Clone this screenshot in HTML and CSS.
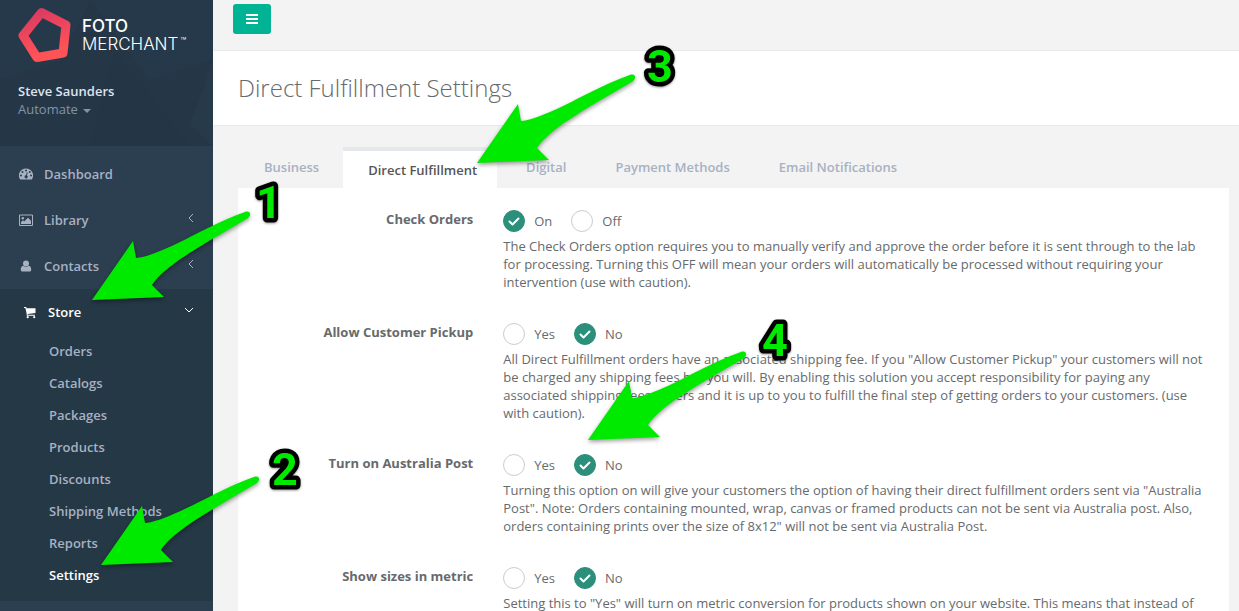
FILE: index.html
```html
<!DOCTYPE html>
<html lang="en">
<head>
	<meta charset="utf-8">
	<title>Direct Fulfillment Settings</title>
	<link rel="stylesheet" href="styles.css">
</head>
<body>
<div class="wrapper">
	<nav class="sidebar">
		<div class="nav-header">
			<svg class="header-pattern" viewBox="0 0 213 146" preserveAspectRatio="none" aria-hidden="true">
				<path d="M0 0L90 0L60 60L0 80Z" fill="#26394a"/>
				<path d="M90 0L213 0L213 60L150 80Z" fill="#26394a"/>
				<path d="M115 50L190 146L90 146Z" fill="#243645"/>
				<path d="M213 60L190 125L213 146Z" fill="#273a49"/>
			</svg>
			<a class="logo" href="#">
				<svg class="logo-mark" width="54" height="56" viewBox="0 0 54 56" aria-hidden="true">
					<defs>
						<linearGradient id="logoFill" x1="0" y1="0" x2="0.3" y2="1">
							<stop offset="0" stop-color="#d93a62"/>
							<stop offset="1" stop-color="#ff5357"/>
						</linearGradient>
					</defs>
					<path d="M23.500 5.500L48 18L45 46L19 50.500L5 28.500Z" fill="none" stroke="url(#logoFill)" stroke-width="9" stroke-linejoin="round"/>
				</svg>
				<span class="logo-text"><b>FOTO</b><span>MERCHANT<small>™</small></span></span>
			</a>
			<a class="profile" href="#">
				<strong>Steve Saunders</strong>
				<span>Automate <i class="caret"></i></span>
			</a>
		</div>
		<ul class="menu">
			<li><a href="#">
				<svg class="icon" viewBox="0 0 14 14"><path fill="currentColor" fill-rule="evenodd" d="M7 1.500a7 7 0 0 0-6 10.700q.2.300.6.300h10.800q.4 0 .6-.300A7 7 0 0 0 7 1.500zM2 9.500a1 1 0 1 1 0-2 1 1 0 0 1 0 2zM3.500 6a1 1 0 1 1 0-2 1 1 0 0 1 0 2zM7 4.500a1 1 0 1 1 0-2 1 1 0 0 1 0 2zM8.700 5.500l-.8 3a1.500 1.500 0 1 1-.9-.200l.8-3zM10.800 6a1 1 0 1 1 0-2 1 1 0 0 1 0 2zM12 9.500a1 1 0 1 1 0-2 1 1 0 0 1 0 2z"/></svg>
				<span>Dashboard</span></a></li>
			<li><a href="#">
				<svg class="icon" viewBox="0 0 14 14"><path fill="none" stroke="currentColor" d="M.5 2h13v10.500H.5z"/><circle cx="3.800" cy="5.200" r="1.200" fill="currentColor"/><path fill="currentColor" d="M2 11V9.300l2-2 1.200 1.200L9 4.800l3 3V11z"/></svg>
				<span>Library</span>
				<svg class="arrow" viewBox="0 0 10 10"><path d="M9 1L5 5L9 9"/></svg></a></li>
			<li><a href="#">
				<svg class="icon" viewBox="0 0 14 14"><circle cx="7" cy="4.500" r="3" fill="currentColor"/><path fill="currentColor" d="M4.300 6.800Q7 9 9.700 6.800C11.800 7.200 12.300 9 12.200 11q-.1 1.500-1.500 1.500H3.300Q1.900 12.500 1.800 11C1.700 9 2.200 7.200 4.300 6.800z"/></svg>
				<span>Contacts</span>
				<svg class="arrow" viewBox="0 0 10 10"><path d="M9 1L5 5L9 9"/></svg></a></li>
			<li class="active"><a href="#">
				<svg class="icon" viewBox="0 0 14 14"><path fill="currentColor" d="M1 2h2.200l.4 1.200H12.500V8l-7.800 1v.8h7.200v1H3.700V9L2.400 3H1z"/><circle cx="4.700" cy="12.200" r="1.100" fill="currentColor"/><circle cx="11.200" cy="12.200" r="1.100" fill="currentColor"/></svg>
				<span>Store</span>
				<svg class="arrow" viewBox="0 0 10 10"><path d="M1 3L5 7L9 3"/></svg></a>
				<ul class="submenu">
					<li><a href="#">Orders</a></li>
					<li><a href="#">Catalogs</a></li>
					<li><a href="#">Packages</a></li>
					<li><a href="#">Products</a></li>
					<li><a href="#">Discounts</a></li>
					<li><a href="#">Shipping Methods</a></li>
					<li><a href="#">Reports</a></li>
					<li><a class="current" href="#">Settings</a></li>
				</ul>
			</li>
		</ul>
	</nav>

	<main class="page">
		<div class="topbar">
			<button class="btn-menu" type="button" aria-label="Toggle menu">
				<svg width="12" height="12" viewBox="0 0 12 12"><path fill="#fff" d="M0 1h12v2H0zM0 5h12v2H0zM0 9h12v2H0z"/></svg>
			</button>
		</div>
		<header class="page-heading">
			<h1>Direct Fulfillment Settings</h1>
		</header>
		<div class="content">
			<div class="tabs">
				<a href="#">Business</a>
				<a class="active" href="#">Direct Fulfillment</a>
				<a href="#">Digital</a>
				<a href="#">Payment Methods</a>
				<a href="#">Email Notifications</a>
			</div>
			<form class="panel">
				<div class="form-group" role="radiogroup" aria-labelledby="check-orders">
					<div class="group-label" id="check-orders">Check Orders</div>
					<div class="group-body">
						<div class="options">
							<label><input type="radio" name="check" checked>On</label>
							<label><input type="radio" name="check">Off</label>
						</div>
						<p class="help">The Check Orders option requires you to manually verify and approve the order before it is sent through to the lab for processing. Turning this OFF will mean your orders will automatically be processed without requiring your intervention (use with caution).</p>
					</div>
				</div>
				<div class="form-group" role="radiogroup" aria-labelledby="pickup">
					<div class="group-label" id="pickup">Allow Customer Pickup</div>
					<div class="group-body">
						<div class="options">
							<label><input type="radio" name="pickup">Yes</label>
							<label><input type="radio" name="pickup" checked>No</label>
						</div>
						<p class="help">All Direct Fulfillment orders have an associated shipping fee. If you "Allow Customer Pickup" your customers will not be charged any shipping fees but you will. By enabling this solution you accept responsibility for paying any associated shipping fees orders and it is up to you to fulfill the final step of getting orders to your customers. (use with caution).</p>
					</div>
				</div>
				<div class="form-group" role="radiogroup" aria-labelledby="auspost">
					<div class="group-label" id="auspost">Turn on Australia Post</div>
					<div class="group-body">
						<div class="options">
							<label><input type="radio" name="auspost">Yes</label>
							<label><input type="radio" name="auspost" checked>No</label>
						</div>
						<p class="help">Turning this option on will give your customers the option of having their direct fulfillment orders sent via "Australia Post". Note: Orders containing mounted, wrap, canvas or framed products can not be sent via Australia post. Also, orders containing prints over the size of 8x12" will not be sent via Australia Post.</p>
					</div>
				</div>
				<div class="form-group" role="radiogroup" aria-labelledby="metric">
					<div class="group-label" id="metric">Show sizes in metric</div>
					<div class="group-body">
						<div class="options">
							<label><input type="radio" name="metric">Yes</label>
							<label><input type="radio" name="metric" checked>No</label>
						</div>
						<p class="help">Setting this to "Yes" will turn on metric conversion for products shown on your website. This means that instead of</p>
					</div>
				</div>
			</form>
		</div>
	</main>
</div>

<!-- step markers drawn over the page -->
<svg class="pointer pointer-1" viewBox="0 0 165 100"><path id="pointer" d="M3 93L44 34L47 51C63 50 93 34 115 23S148 8 156 5C161 3 163 8 159 11C123 33 76 57 63 78L75 90Z"/></svg>
<svg class="pointer pointer-2" viewBox="0 0 165 100"><use href="#pointer"/></svg>
<svg class="pointer pointer-3" viewBox="0 0 165 100"><use href="#pointer"/></svg>
<svg class="pointer pointer-4" viewBox="0 0 165 100"><use href="#pointer"/></svg>
<svg class="step step-1" viewBox="0 0 44 56"><text x="22" y="44">1</text></svg>
<svg class="step step-2" viewBox="0 0 44 56"><text x="22" y="44">2</text></svg>
<svg class="step step-3" viewBox="0 0 44 56"><text x="22" y="44">3</text></svg>
<svg class="step step-4" viewBox="0 0 44 56"><text x="22" y="44">4</text></svg>
</body>
</html>
```
FILE: styles.css
```css
* {
	box-sizing: border-box;
}

body {
	margin: 0;
	position: relative;
	height: 100vh;
	overflow: hidden;
	background: #f3f3f3;
	color: #676a6c;
	font-family: "Open Sans", Helvetica, Arial, sans-serif;
	font-size: 13px;
	line-height: 18px;
}

a {
	color: inherit;
	text-decoration: none;
}

ul {
	list-style: none;
	margin: 0;
	padding: 0;
}

.wrapper {
	display: flex;
	min-height: 100vh;
}

/* sidebar */
.sidebar {
	flex: 0 0 213px;
	background: #2c3f50;
}

.nav-header {
	position: relative;
	height: 146px;
	padding: 7px 18px;
	background: #253747;
}

.header-pattern {
	position: absolute;
	top: 0;
	left: 0;
	width: 100%;
	height: 100%;
}

.logo {
	position: relative;
	display: flex;
	gap: 10px;
	color: #fff;
	font-family: Inter, sans-serif;
	font-size: 17px;
}

.logo-text {
	display: flex;
	flex-direction: column;
	padding-top: 10px;
	font-weight: 300;
}

.logo-text b {
	font-weight: 500;
}

.logo-text small {
	margin-left: 2px;
	font-size: 10px;
	vertical-align: top;
	line-height: 12px;
}

.profile {
	position: relative;
	display: flex;
	flex-direction: column;
	margin-top: 19px;
	color: #8095a8;
}

.profile strong {
	color: #dfe4ed;
	font-weight: 600;
}

.caret {
	display: inline-block;
	margin-left: 2px;
	vertical-align: middle;
	border-top: 4px solid;
	border-left: 4px solid transparent;
	border-right: 4px solid transparent;
}

.menu {
	padding-top: 5px;
	color: #a7b1c2;
	font-weight: 600;
}

.menu > li > a {
	display: flex;
	align-items: center;
	height: 46px;
	padding: 0 19px;
}

.icon {
	width: 14px;
	height: 14px;
	margin-right: 11px;
}

.arrow {
	width: 10px;
	height: 10px;
	margin: 0 0 4px auto;
	fill: none;
	stroke: currentColor;
}

.menu > .active {
	padding-bottom: 10px;
	border-left: 4px solid #253846;
	background: #253846;
}

.menu > .active > a {
	color: #fff;
}

.submenu a {
	display: block;
	padding: 7px 10px 7px 45px;
}

.submenu .current {
	color: #fff;
}

/* main column */
.page {
	flex: 1;
	min-width: 0;
}

.topbar {
	height: 51px;
	padding: 4px 20px;
	border-bottom: 1px solid #e7eaec;
}

.btn-menu {
	display: flex;
	align-items: center;
	justify-content: center;
	width: 38px;
	height: 30px;
	border: 0;
	border-radius: 3px;
	background: #00b395;
	cursor: pointer;
}

.page-heading {
	padding: 21px 25px;
	border-bottom: 1px solid #e7eaec;
	background: #fff;
}

.page-heading h1 {
	margin: 0;
	font-size: 24px;
	font-weight: 300;
	line-height: 32px;
}

.content {
	padding: 21px 10px 0 25px;
}

.tabs {
	display: flex;
	gap: 4px;
	padding-left: 1px;
	color: #a7b1c2;
	font-weight: 600;
}

.tabs a {
	padding: 11px 20px 12px 25px;
}

.tabs .active {
	padding: 10px 20px 9px 25px;
	border-top: 4px solid #e4e8ec;
	background: #fff;
	color: #555;
}

.panel {
	padding: 18px 5px 0;
	background: #fff;
}

.form-group {
	display: grid;
	grid-template-columns: 1fr 3fr;
	margin-bottom: 28px;
}

.group-label {
	padding: 4px 15px;
	font-weight: 700;
	text-align: right;
}

.group-body {
	padding: 0 15px;
}

.options {
	display: flex;
	align-items: center;
	gap: 19px;
	height: 29px;
	margin-bottom: 2px;
}

.options label {
	display: flex;
	align-items: center;
	gap: 9px;
}

.options input {
	appearance: none;
	width: 22px;
	height: 22px;
	margin: 0;
	border: 1px solid #ccc;
	border-radius: 50%;
	background: #fff;
}

.options input:checked {
	border-color: #2b8f7b;
	background: #2b8f7b url("data:image/svg+xml,%3Csvg xmlns='http://www.w3.org/2000/svg' viewBox='0 0 20 20'%3E%3Cpath d='M5.500 10.500L8.500 13.500L14.500 7.500' fill='none' stroke='white' stroke-width='2' stroke-linecap='round' stroke-linejoin='round'/%3E%3C/svg%3E");
}

.help {
	margin: 0;
}

/* numbered pointers */
.pointer {
	position: absolute;
	width: 165px;
	height: 100px;
	fill: #00ea00;
	filter: drop-shadow(0 2px 2px rgba(0, 0, 0, 0.4));
}

.pointer-1 { left: 89px; top: 207px; }
.pointer-2 { left: 98px; top: 472px; }
.pointer-3 { left: 474px; top: 70px; }
.pointer-4 { left: 585px; top: 347px; }

.step {
	position: absolute;
	width: 44px;
	height: 56px;
	overflow: visible;
	fill: #00ea00;
	stroke: #000;
	stroke-width: 9px;
	stroke-linejoin: round;
	paint-order: stroke fill;
	font-family: Roboto, "Liberation Sans", sans-serif;
	font-size: 45px;
	font-weight: 700;
	text-anchor: middle;
	filter: drop-shadow(0 1px 1px rgba(0, 0, 0, 0.4));
}

.step-1 { left: 247px; top: 174px; }
.step-2 { left: 263px; top: 441px; }
.step-3 { left: 638px; top: 38px; }
.step-4 { left: 753px; top: 312px; }
```
